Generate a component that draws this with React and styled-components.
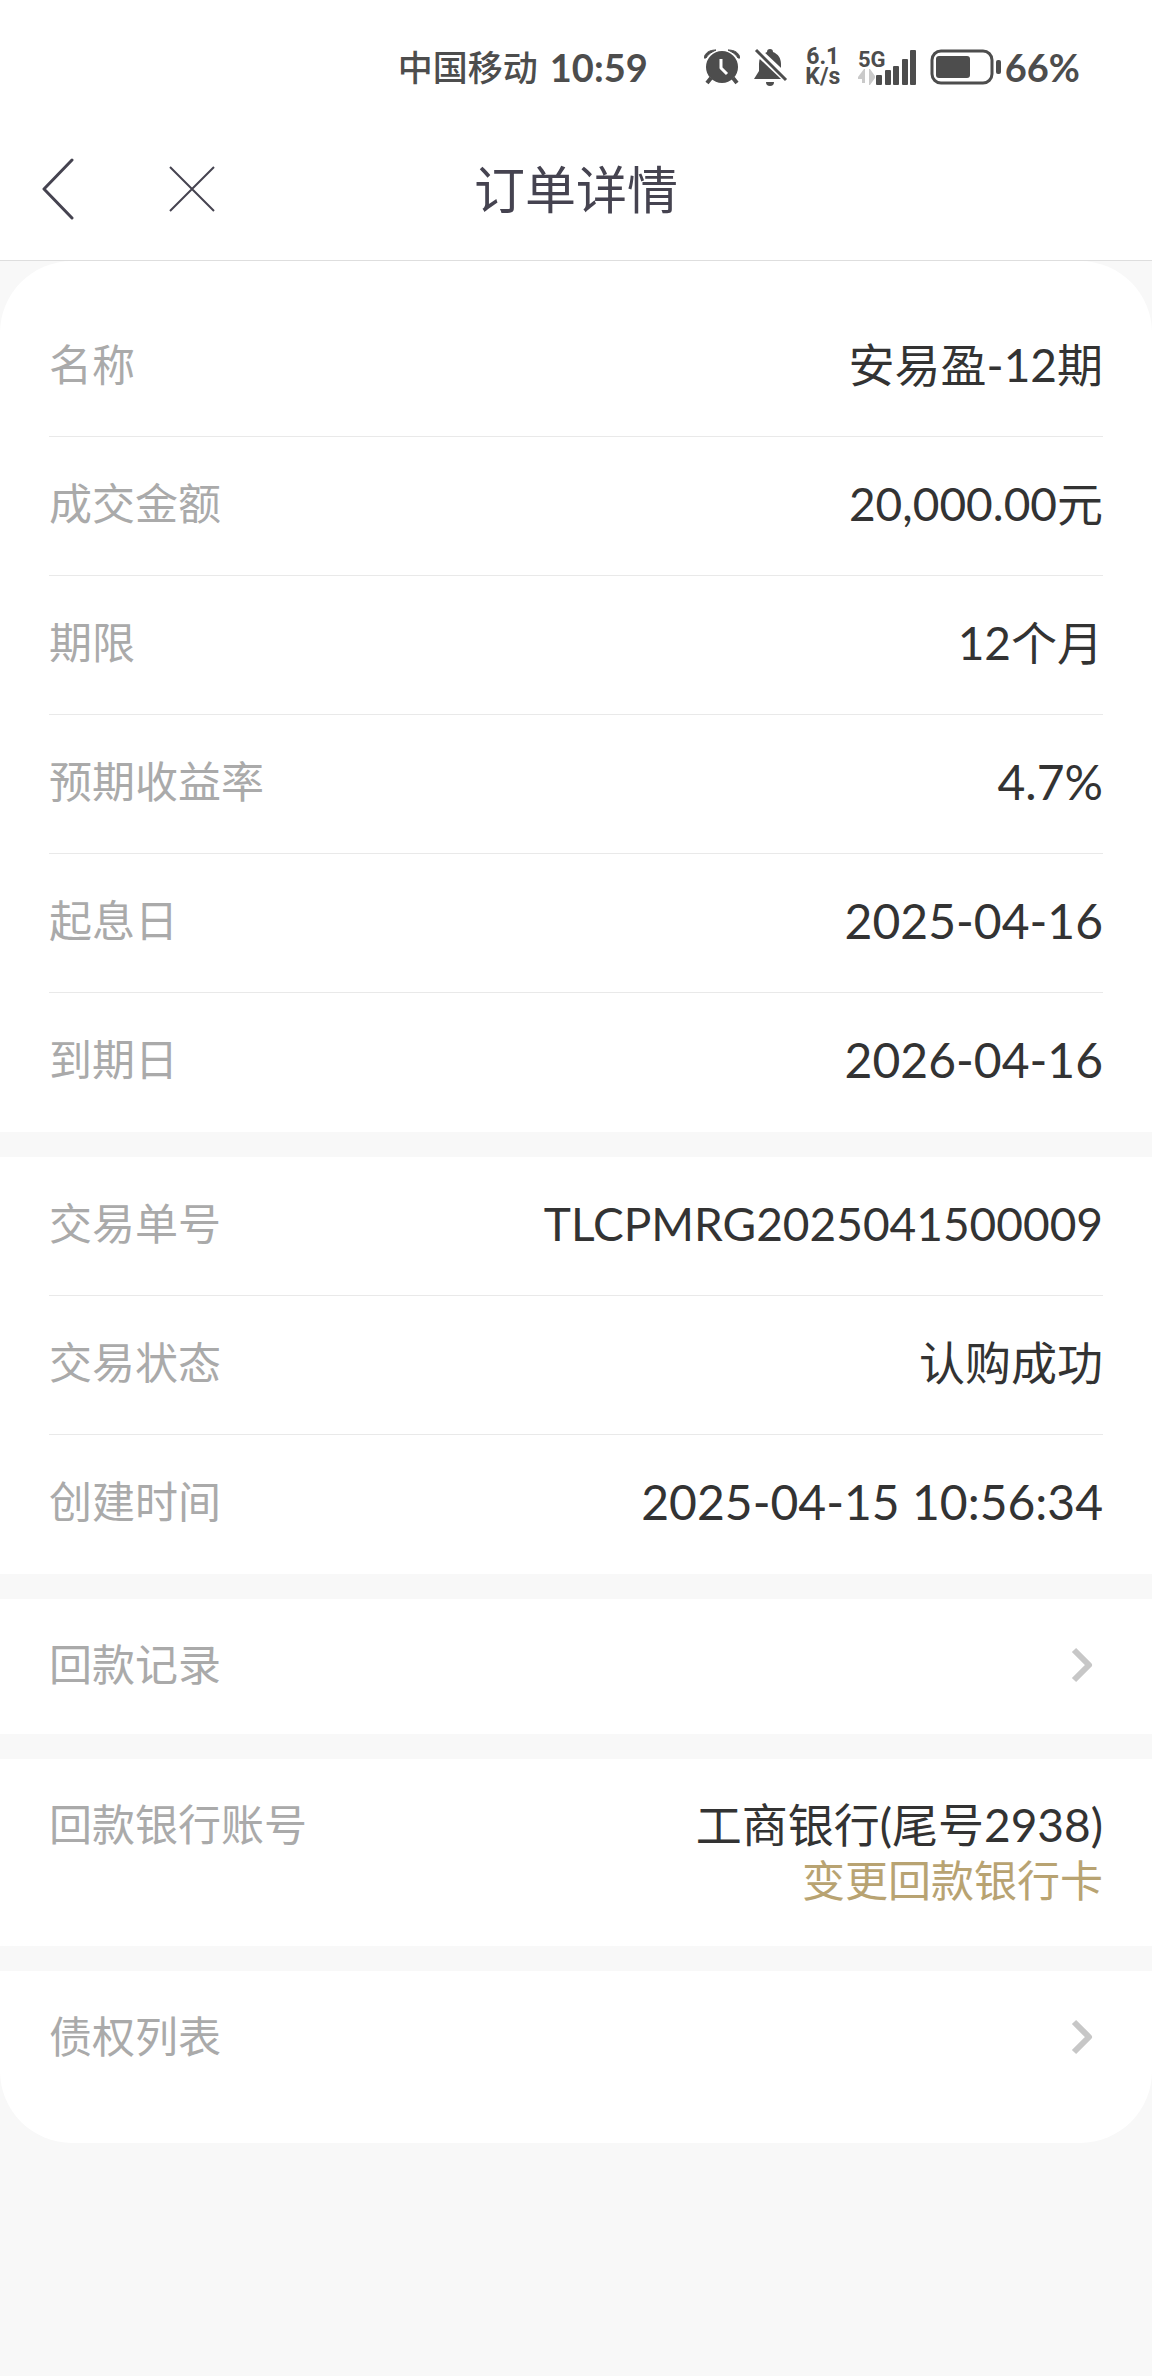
import React from 'react';
import styled, { createGlobalStyle } from 'styled-components';

const GlobalStyle = createGlobalStyle`
  * {
    box-sizing: border-box;
  }

  body {
    margin: 0;
    background: #f8f8f8;
    color: #333;
    font-family: Lato, 'Noto Sans CJK SC', sans-serif;
  }

  button {
    padding: 0;
    border: 0;
    background: none;
    color: inherit;
    font-family: inherit;
    cursor: pointer;
  }
`;

const StatusBar = styled.div`
  display: flex;
  align-items: center;
  justify-content: flex-end;
  height: 118px;
  padding: 16px 72px 0 0;
  background: #fff;
  color: #4d4d4d;
  font-weight: 700;
  line-height: 40px;

  svg {
    display: block;
    flex: none;
  }
`;

const Carrier = styled.span`
  margin-right: 12px;
  font-size: 35px;
  font-weight: 500;
`;

const Clock = styled.span`
  margin-right: 56px;
  font-size: 38px;
`;

const StatusIcons = styled.div`
  display: flex;
  align-items: center;
  gap: 14px;
`;

const Speed = styled.span`
  display: flex;
  flex-direction: column;
  align-items: center;
  width: 42px;
  font-family: Roboto, sans-serif;
  font-size: 23px;
  line-height: 20px;
`;

const Battery = styled.span`
  display: flex;
  align-items: center;
  gap: 4px;
  font-size: 38px;
`;

const Header = styled.header`
  display: grid;
  grid-template-columns: 1fr auto 1fr;
  align-items: center;
  height: 143px;
  padding: 0 40px;
  border-bottom: 1px solid #dedede;
  background: #fff;
  color: #454350;
`;

const HeaderActions = styled.div`
  display: flex;
  align-items: center;
  gap: 90px;

  svg {
    display: block;
  }
`;

const Title = styled.h1`
  margin: 0;
  padding-top: 2px;
  font-size: 51px;
  font-weight: 400;
  line-height: 60px;
`;

const Card = styled.main`
  display: flex;
  flex-direction: column;
  gap: 25px;
  overflow: hidden;
  border-radius: 72px;
  background: #f8f8f8;
`;

const Section = styled.section`
  padding: ${({ $first, $last }) => `${$first ? 37 : 0}px 49px ${$last ? 37 : 0}px`};
  background: #fff;
`;

const List = styled.dl`
  margin: 0;
`;

const Row = styled.div`
  display: flex;
  align-items: center;
  justify-content: space-between;
  height: 139px;
  padding-bottom: 5px;
  border-bottom: 1px solid #e9e9e9;

  &:last-child {
    border-bottom-color: transparent;
  }
`;

const Label = styled.dt`
  color: #aaa;
  font-size: 43px;
  line-height: 56px;
`;

const Value = styled.dd`
  margin: 0;
  font-size: ${({ $numeric }) => ($numeric ? 48 : 46)}px;
  line-height: 56px;
  text-align: right;
`;

const LinkRow = styled.button`
  display: flex;
  align-items: center;
  justify-content: space-between;
  width: 100%;
  height: 135px;
  padding: 0 9px 3px 0;
  color: #aaa;
  font-size: 43px;
  line-height: 56px;
`;

const BankRow = styled.dl`
  display: flex;
  align-items: flex-start;
  justify-content: space-between;
  margin: 0;
  padding: 38px 0 37px;
`;

const ChangeCard = styled.a`
  display: block;
  color: #b8a372;
  font-size: 43px;
  text-decoration: none;
`;

const AlarmIcon = () => (
  <svg width="36" height="36" viewBox="0 0 36 36" aria-hidden="true">
    <circle cx="18" cy="18" r="16" fill="currentColor" />
    <path
      d="M0 9C1 4 5 1 12 1 8 3 4 5 2 9Zm36 0C35 4 31 1 24 1c4 2 8 4 10 8Z"
      fill="currentColor"
      stroke="currentColor"
      strokeWidth="1"
      strokeLinejoin="round"
    />
    <path d="m7 29-4 5m26-5 4 5" stroke="currentColor" strokeWidth="4" />
    <path d="M17 10v9l6 6" fill="none" stroke="#fff" strokeWidth="3" strokeLinejoin="round" />
  </svg>
);

const MutedIcon = () => (
  <svg width="34" height="38" viewBox="0 0 34 38" aria-hidden="true">
    <path
      d="M16 1c2 0 3 1 3 3 5 2 8 6 8 12v7l5 8H0l5-8v-7C5 10 8 6 13 4c0-2 1-3 3-3Z"
      fill="currentColor"
    />
    <path d="M12 34h8a4 4 0 0 1-8 0Z" fill="currentColor" />
    <path d="M0 0 34 32" stroke="#fff" strokeWidth="8" />
    <path d="m2 2 30 30" stroke="currentColor" strokeWidth="3" />
  </svg>
);

const SignalIcon = () => (
  <svg width="58" height="52" viewBox="0 -8 58 52" fill="currentColor" role="img" aria-label="5G">
    <text x="0" y="18" fontFamily="Roboto, sans-serif" fontSize="22" fontWeight="700">
      5G
    </text>
    <path d="M0 30v-2l6-8h1v14H4v-4Zm11-10h1l5 7v2l-5 7h-1Z" fill="#cacaca" />
    <rect x="18" y="26" width="6" height="10" rx="1" />
    <rect x="27" y="21" width="6" height="15" rx="1" />
    <rect x="35" y="17" width="6" height="19" rx="1" />
    <rect x="44" y="10" width="6" height="26" rx="1" />
    <rect x="52" y="1" width="6" height="35" rx="1" />
  </svg>
);

const BatteryIcon = () => (
  <svg width="71" height="36" viewBox="0 0 71 36" aria-hidden="true">
    <rect x="2" y="2" width="60" height="32" rx="9" fill="none" stroke="currentColor" strokeWidth="3" />
    <rect x="6" y="7" width="34" height="22" rx="3" fill="currentColor" />
    <rect x="66" y="11" width="5" height="14" rx="2" fill="currentColor" />
  </svg>
);

const Chevron = () => (
  <svg width="24" height="36" viewBox="0 0 24 36" aria-hidden="true">
    <path d="m4 3 15 15L4 33" fill="none" stroke="#c7c7c7" strokeWidth="6" strokeLinejoin="round" />
  </svg>
);

const product = [
  { label: '名称', value: '安易盈-12期' },
  { label: '成交金额', value: '20,000.00元' },
  { label: '期限', value: '12个月' },
  { label: '预期收益率', value: '4.7%', numeric: true },
  { label: '起息日', value: '2025-04-16', numeric: true },
  { label: '到期日', value: '2026-04-16', numeric: true },
];

const trade = [
  { label: '交易单号', value: 'TLCPMRG2025041500009' },
  { label: '交易状态', value: '认购成功' },
  { label: '创建时间', value: '2025-04-15 10:56:34', numeric: true },
];

const Details = ({ items }) => (
  <List>
    {items.map(({ label, value, numeric }) => (
      <Row key={label}>
        <Label>{label}</Label>
        <Value $numeric={numeric}>{value}</Value>
      </Row>
    ))}
  </List>
);

const App = () => (
  <>
    <GlobalStyle />
    <StatusBar>
      <Carrier>中国移动</Carrier>
      <Clock>10:59</Clock>
      <StatusIcons>
        <AlarmIcon />
        <MutedIcon />
        <Speed>
          <span>6.1</span>
          <span>K/s</span>
        </Speed>
        <SignalIcon />
        <Battery>
          <BatteryIcon />
          66%
        </Battery>
      </StatusIcons>
    </StatusBar>
    <Header>
      <HeaderActions>
        <button type="button" aria-label="返回">
          <svg width="36" height="62" viewBox="0 0 36 62" fill="none" stroke="currentColor" strokeWidth="3">
            <path d="M32 2 4 31l28 29" strokeLinecap="round" strokeLinejoin="round" />
          </svg>
        </button>
        <button type="button" aria-label="关闭">
          <svg width="52" height="52" viewBox="0 0 52 52" stroke="currentColor" strokeWidth="2">
            <path d="m4 4 44 44M48 4 4 48" />
          </svg>
        </button>
      </HeaderActions>
      <Title>订单详情</Title>
    </Header>
    <Card>
      <Section $first>
        <Details items={product} />
      </Section>
      <Section>
        <Details items={trade} />
      </Section>
      <Section>
        <LinkRow type="button">
          回款记录
          <Chevron />
        </LinkRow>
      </Section>
      <Section>
        <BankRow>
          <Label>回款银行账号</Label>
          <Value>
            工商银行(尾号2938)
            <ChangeCard href="#change-card">变更回款银行卡</ChangeCard>
          </Value>
        </BankRow>
      </Section>
      <Section $last>
        <LinkRow type="button">
          债权列表
          <Chevron />
        </LinkRow>
      </Section>
    </Card>
  </>
);

export default App;
